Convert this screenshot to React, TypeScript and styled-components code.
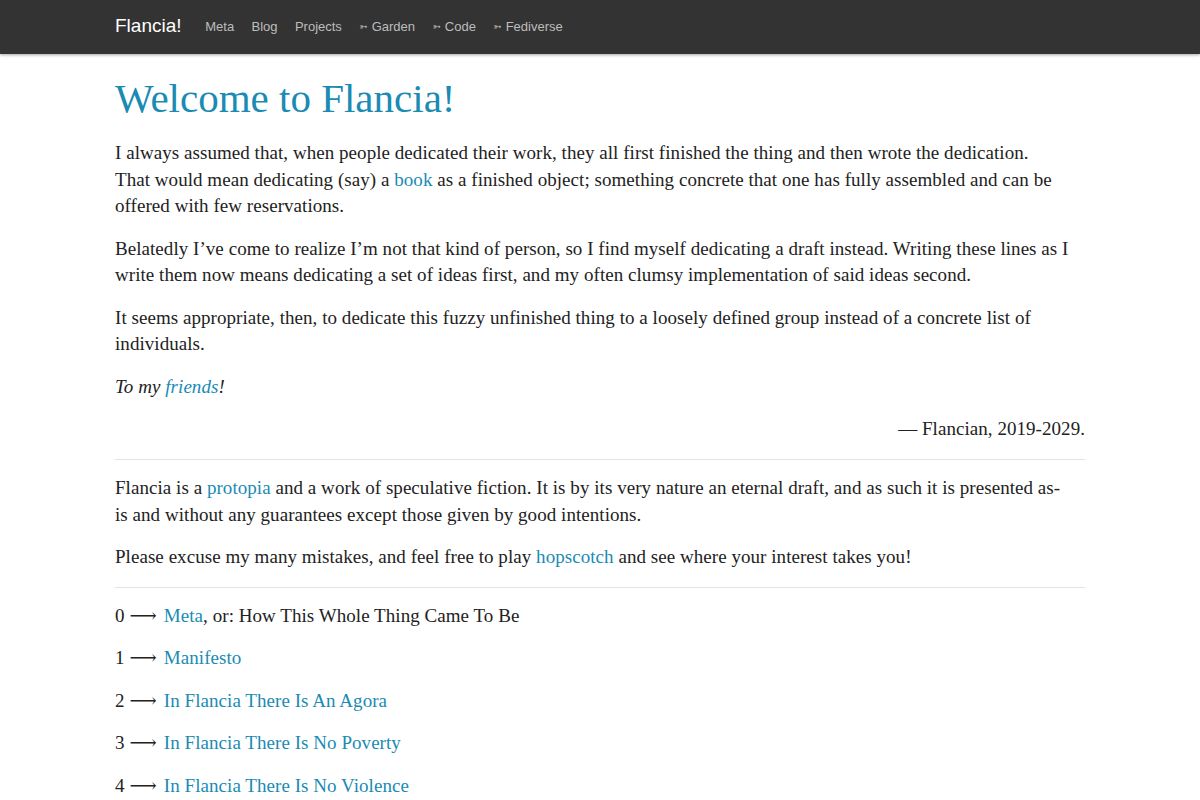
import styled, { createGlobalStyle } from 'styled-components';

const GlobalStyle = createGlobalStyle`
  body {
    margin: 0;
    background: #fff;
    color: #222;
    font-family: "Liberation Serif", "DejaVu Serif", serif;
  }
  a {
    color: #1a8bb3;
    text-decoration: none;
  }
`;

const NavBar = styled.nav`
  background: #333;
  height: 54px;
  box-shadow: 0 1px 3px rgba(0, 0, 0, 0.35);
`;

const NavInner = styled.div`
  width: 970px;
  margin: 0 auto;
  height: 100%;
  display: flex;
  align-items: center;
  padding-bottom: 2px;
  box-sizing: border-box;
  font-family: "Liberation Sans", Arial, sans-serif;
`;

const Brand = styled.a`
  && {
    color: #fff;
  }
  font-size: 19px;
  margin-right: 15px;
`;

const NavLink = styled.a`
  && {
    color: #bdbdbd;
  }
  font-size: 13px;
  padding: 0 8.7px;
`;

const Arrow = styled.span`
  font-family: "DejaVu Sans", sans-serif;
  font-size: 10px;
  margin-right: 4px;
  position: relative;
  top: -1px;
`;

const Main = styled.main`
  width: 970px;
  margin: 0 auto;
  padding-top: 22px;
`;

const Title = styled.h1`
  font-family: "Liberation Serif", serif;
  font-weight: normal;
  font-size: 41px;
  color: #1a8bb3;
  margin: 0 0 19px;
  line-height: 1.1;
`;

const Para = styled.p<{ $right?: boolean }>`
  font-size: 19px;
  letter-spacing: 0.05px;
  line-height: 26.5px;
  margin: 0 0 16px;
  text-align: ${(p) => (p.$right ? 'right' : 'left')};
`;

const Rule = styled.hr`
  border: 0;
  border-top: 1px solid #e3e3e3;
  margin: 15.5px 0 15.5px;
`;

const Chapter = styled(Para)`
  margin-bottom: 15.9px;
`;

const LongArrow = styled.span`
  display: inline-block;
  margin: 0 7px 0 5px;
`;

const navItems: { label: string; ext?: boolean }[] = [
  { label: 'Meta' },
  { label: 'Blog' },
  { label: 'Projects' },
  { label: 'Garden', ext: true },
  { label: 'Code', ext: true },
  { label: 'Fediverse', ext: true },
];

const chapters: { title: string; rest?: string }[] = [
  { title: 'Meta', rest: ', or: How This Whole Thing Came To Be' },
  { title: 'Manifesto' },
  { title: 'In Flancia There Is An Agora' },
  { title: 'In Flancia There Is No Poverty' },
  { title: 'In Flancia There Is No Violence' },
];

export default function App() {
  return (
    <>
      <GlobalStyle />
      <NavBar>
        <NavInner>
          <Brand href="#">Flancia!</Brand>
          {navItems.map((item) => (
            <NavLink key={item.label} href="#">
              {item.ext && <Arrow>➳</Arrow>}
              {item.label}
            </NavLink>
          ))}
        </NavInner>
      </NavBar>
      <Main>
        <Title>Welcome to Flancia!</Title>
        <Para>
          I always assumed that, when people dedicated their work, they all first finished the thing and
          then wrote the dedication.
          <br />
          That would mean dedicating (say) a <a href="#">book</a> as a finished object; something concrete
          that one has fully assembled and can be offered with few reservations.
        </Para>
        <Para>
          Belatedly I’ve come to realize I’m not that kind of person, so I find myself dedicating a draft
          instead. Writing these lines as I write them now means dedicating a set of ideas first, and my
          often clumsy implementation of said ideas second.
        </Para>
        <Para>
          It seems appropriate, then, to dedicate this fuzzy unfinished thing to a loosely defined group
          instead of a concrete list of individuals.
        </Para>
        <Para>
          <em>
            To my <a href="#">friends</a>!
          </em>
        </Para>
        <Para $right>— Flancian, 2019-2029.</Para>
        <Rule />
        <Para>
          Flancia is a <a href="#">protopia</a> and a work of speculative fiction. It is by its very nature
          an eternal draft, and as such it is presented as-
          <br />
          is and without any guarantees except those given by good intentions.
        </Para>
        <Para>
          Please excuse my many mistakes, and feel free to play <a href="#">hopscotch</a> and see where your
          interest takes you!
        </Para>
        <Rule />
        {chapters.map((c, i) => (
          <Chapter key={c.title}>
            {i}
            <LongArrow>⟶</LongArrow>
            <a href="#">{c.title}</a>
            {c.rest}
          </Chapter>
        ))}
      </Main>
    </>
  );
}
